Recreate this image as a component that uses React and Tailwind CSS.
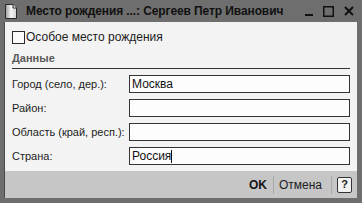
import React from 'react';

const rows = [
  { label: 'Город (село, дер.):', value: 'Москва' },
  { label: 'Район:', value: '' },
  { label: 'Область (край, респ.):', value: '' },
  { label: 'Страна:', value: 'Россия', caret: true },
];

const DocIcon = () => (
  <svg width="12" height="15" viewBox="0 0 12 15" className="shrink-0">
    <defs>
      <linearGradient id="dg" x1="0" y1="0" x2="1" y2="0">
        <stop offset="0" stopColor="#9a9a9a" />
        <stop offset="0.5" stopColor="#f4f4f4" />
        <stop offset="1" stopColor="#d0d0d0" />
      </linearGradient>
    </defs>
    <path d="M0.5 0.5 H8 L11.5 4 V14.5 H0.5 Z" fill="url(#dg)" stroke="#2a2a2a" />
    <path d="M8 0.5 V4 H11.5" fill="#e8e8e8" stroke="#2a2a2a" />
  </svg>
);

export default function App() {
  return (
    <div className="w-[362px] h-[203px] bg-[#6e6e6e] flex flex-col overflow-hidden text-[#1c1c1c] font-['Liberation_Sans',Arial,sans-serif]">
      {/* Title bar */}
      <div className="h-[22px] shrink-0 flex items-center pl-[5px] pr-[8px]">
        <DocIcon />
        <span className="ml-[9px] text-[12px] font-bold text-[#111] whitespace-nowrap tracking-[-0.1px]">
          Место рождения ...: Сергеев Петр Иванович
        </span>
        <div className="ml-auto flex items-center gap-[10px]">
          <svg width="8" height="12" viewBox="0 0 8 12"><rect x="0" y="9" width="8" height="2" fill="#111" /></svg>
          <svg width="11" height="12" viewBox="0 0 11 12"><rect x="0.75" y="1.75" width="9.5" height="9.5" fill="none" stroke="#111" strokeWidth="1.5" /></svg>
          <svg width="10" height="12" viewBox="0 0 10 12"><path d="M1 2 L9 10 M9 2 L1 10" stroke="#111" strokeWidth="2" /></svg>
        </div>
      </div>

      {/* Body */}
      <div className="flex-1 flex flex-col ml-[4px] mr-[5px] mb-[5px] border-l border-[#4a4a4a]">
        <div className="h-[149px] bg-[#f3f3f3] pt-[9px] pl-[7px] pr-[7px] text-[11px]">
          <div className="h-[13px] flex items-center">
            <div className="w-[13px] h-[13px] border border-[#2a2a2a] bg-[#fafafa]" />
            <span className="ml-[1px] text-[12px] leading-[13px] whitespace-nowrap">Особое место рождения</span>
          </div>
          <div className="mt-[8px] h-[17px] border-b border-[#333] font-bold text-[#5a5a5a] text-[11px] leading-[13px]">
            Данные
          </div>
          <div className="mt-[6px] flex flex-col gap-[6px]">
            {rows.map((r) => (
              <div key={r.label} className="h-[18px] flex items-center">
                <span className="w-[117px] shrink-0 text-[11px] whitespace-nowrap">{r.label}</span>
                <div className="w-[221px] h-[18px] border border-[#333] bg-[#fdfdfd] flex items-center pl-[2px] text-[12px] text-[#111]">
                  {r.value}
                  {r.caret && <span className="w-[1px] h-[13px] bg-[#111]" />}
                </div>
              </div>
            ))}
          </div>
        </div>

        {/* Bottom bar */}
        <div className="flex-1 bg-[#c6c6c6] flex items-center justify-end pr-[5px] text-[12px]">
          <span className="font-bold text-[#141414]">OK</span>
          <div className="w-[1px] h-[18px] bg-[#a8a8a8] ml-[6px] mr-[5px]" />
          <span className="text-[#1c1c1c]">Отмена</span>
          <div className="w-[1px] h-[18px] bg-[#a8a8a8] ml-[9px] mr-[5px]" />
          <div className="w-[15px] h-[16px] border border-[#333] rounded-[2px] bg-[#f2f2f2] flex items-center justify-center font-bold text-[11px] leading-none">
            ?
          </div>
        </div>
      </div>
    </div>
  );
}
